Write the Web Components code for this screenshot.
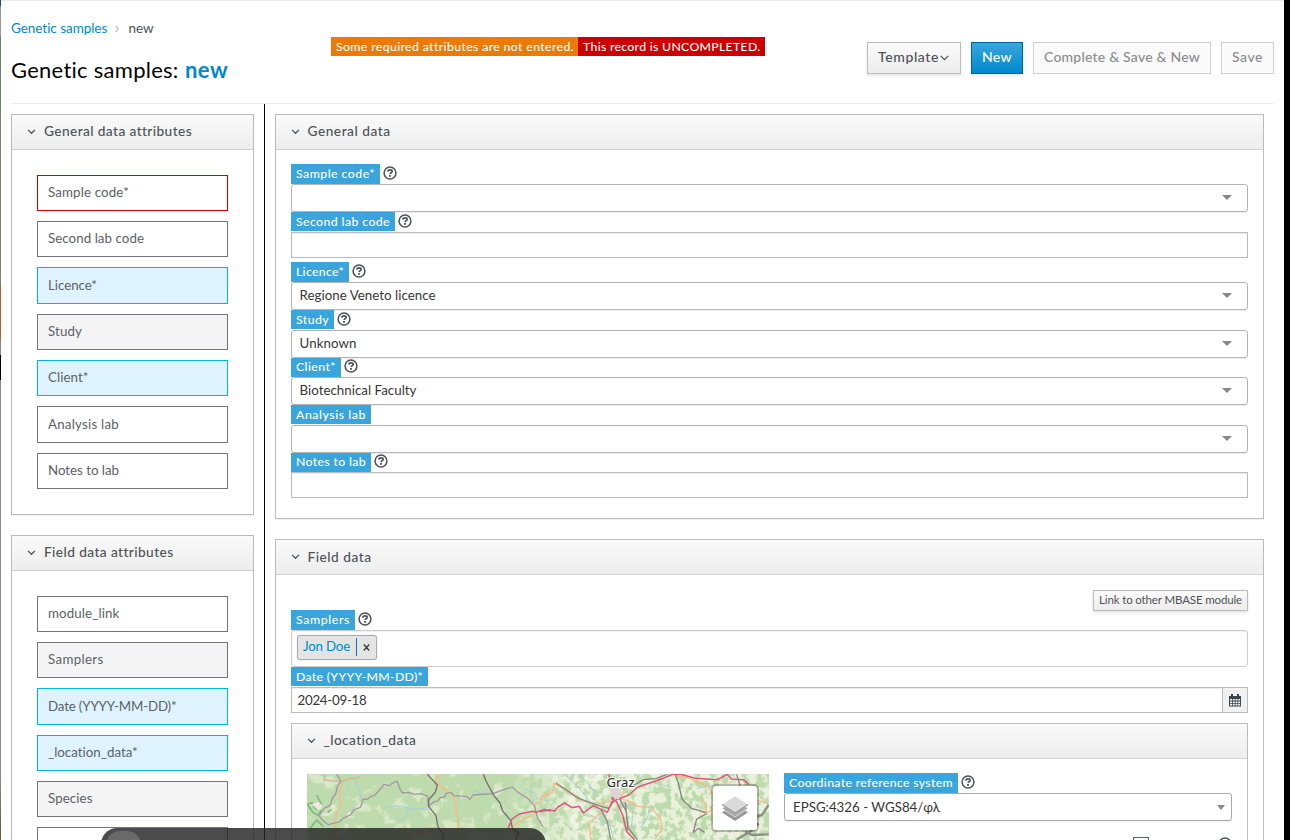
<!DOCTYPE html>
<html lang="en">
<head>
<meta charset="utf-8">
<title>Genetic samples: new</title>
<style>
html,body{margin:0;height:840px;overflow:hidden;background:#fff}
body{font-family:Lato,"Noto Sans","Open Sans",sans-serif;font-size:13.5px;color:#4d5258}
</style>
</head>
<body>
<sample-app></sample-app>
<script>
const make = (name, html, setup) => {
  const t = document.createElement('template');
  t.innerHTML = html;
  customElements.define(name, class extends HTMLElement {
    constructor() { super(); this.attachShadow({mode: 'open'}); }
    connectedCallback() {
      if (this.shadowRoot.childNodes.length) return;
      const c = t.content.cloneNode(true);
      if (setup) setup(this, c);
      this.shadowRoot.append(c);
    }
  });
};

make('sample-app', `
<style>
:host{display:grid;grid-template-columns:1px 1283px 6px;height:840px;overflow:hidden;position:relative}
.edge{background:linear-gradient(#0a4e7c 0 6px,#999 6px 36px,#71806c 36px 110px,#7b8670 110px 285px,#b0652b 285px 340px,#8b8b8b 340px 355px,#000 355px 380px,#8a8d8a 380px 780px,#666040 830px)}
.bar{background:#000}
.page{border-top:1px solid #ededed;padding:0 10px;display:flex;flex-direction:column;min-width:0}
header{height:102px;flex:none;display:grid;grid-template-columns:320px 1fr auto;border-bottom:1px solid #ededed}
.crumb{display:flex;align-items:center;padding-top:17px;height:20px;font-size:13.5px}
.crumb svg{margin:1px 10px 0 7px}
a,.rec{color:#0088ce}
h1{margin:16px 0 0;font-weight:400;font-size:22px;line-height:32px;color:#030303;display:flex;gap:6px}
.rec{font-weight:700}
.notes{display:flex;padding-top:36px;color:#fff;font-size:12.3px;line-height:19px;font-weight:500;height:19px}
.notes span{padding:0 4.5px 0 5px}
.o{background:#ec7a08}.r{background:#c00}
.actions{display:flex;gap:10px;padding-top:41px;height:32px}
.cols{display:grid;grid-template-columns:253px 1px 1fr;height:734px}
.rule{background:#000}
.left{padding:10px 10px 0 0;display:flex;flex-direction:column;gap:20px}
.right{padding:10px 10px 0 10px;display:flex;flex-direction:column;gap:20px}
.items{display:flex;flex-direction:column;gap:10px;padding:24.75px 25px 0}
.general{padding:14px 15px 0}
.fields{padding:15px 15px 0}
.top{display:flex;justify-content:flex-end;height:20px}
.nested{margin-top:10px}
.loc{display:grid;grid-template-columns:462px 448px;gap:15px;padding:15px 15px 0}
.crs{margin-top:-1px}
.extra{display:flex;justify-content:flex-end;gap:69px;margin-top:16px}
.extra i{width:14px;height:14px;border:1px solid #5c6166}
.pill{position:absolute;left:101px;top:828px;width:445px;height:40px;border-radius:16px 16px 0 0;background:rgba(38,38,38,.83)}
.pill:before{content:"";position:absolute;left:5px;top:3px;width:35px;height:35px;border-radius:14px;background:#696969}
</style>
<div class="edge"></div>
<div class="page">
 <header>
  <div>
   <div class="crumb"><a><fit-text w="96.5">Genetic samples</fit-text></a>
    <svg width="4" height="8" viewBox="0 0 4 8"><path d="M.6 .8 3.3 4 .6 7.2" fill="none" stroke="#9c9c9c"/></svg>
    <fit-text w="25">new</fit-text></div>
   <h1><fit-text w="168">Genetic samples:</fit-text><fit-text class="rec" w="43">new</fit-text></h1>
  </div>
  <div class="notes"><span class="o"><fit-text w="237.5">Some required attributes are not entered.</fit-text></span><span class="r"><fit-text w="177.5">This record is UNCOMPLETED.</fit-text></span></div>
  <div class="actions">
   <action-button kind="plain"><fit-text w="61">Template</fit-text><svg width="9" height="6" viewBox="0 0 9 6" style="margin:2px 1px 0 0"><path d="M.7 .8 4.5 4.6 8.3 .8" fill="none" stroke="#4d5258" stroke-width="1.2"/></svg></action-button>
   <action-button kind="primary"><fit-text w="30">New</fit-text></action-button>
   <action-button kind="off"><fit-text w="156">Complete &amp; Save &amp; New</fit-text></action-button>
   <action-button kind="off"><fit-text w="31">Save</fit-text></action-button>
  </div>
 </header>
 <div class="cols">
  <div class="left">
   <panel-box style="height:399px"><fit-text slot="title" w="147.5">General data attributes</fit-text>
    <div class="items">
     <attr-item kind="missing"><fit-text w="81">Sample code*</fit-text></attr-item>
     <attr-item><fit-text w="96">Second lab code</fit-text></attr-item>
     <attr-item kind="req"><fit-text w="49">Licence*</fit-text></attr-item>
     <attr-item kind="grey"><fit-text w="34">Study</fit-text></attr-item>
     <attr-item kind="req"><fit-text w="40.5">Client*</fit-text></attr-item>
     <attr-item><fit-text w="71">Analysis lab</fit-text></attr-item>
     <attr-item><fit-text w="71">Notes to lab</fit-text></attr-item>
    </div></panel-box>
   <panel-box style="height:399px;flex:none"><fit-text slot="title" w="129">Field data attributes</fit-text>
    <div class="items">
     <attr-item><fit-text w="71.5">module_link</fit-text></attr-item>
     <attr-item kind="grey"><fit-text w="55.5">Samplers</fit-text></attr-item>
     <attr-item kind="req"><fit-text w="128.5">Date (YYYY-MM-DD)*</fit-text></attr-item>
     <attr-item kind="req"><fit-text w="90">_location_data*</fit-text></attr-item>
     <attr-item kind="grey"><fit-text w="44.5">Species</fit-text></attr-item>
     <attr-item><fit-text w="8">P</fit-text></attr-item>
    </div></panel-box>
  </div>
  <div class="rule"></div>
  <div class="right">
   <panel-box style="height:403px;--inset:14.5px"><fit-text slot="title" w="83">General data</fit-text>
    <div class="general">
     <form-row label="Sample code*" w="79" help lead="20" tall kind="select"></form-row>
     <form-row label="Second lab code" w="94" help lead="20" kind="input" style="margin-bottom:4px"></form-row>
     <form-row label="Licence*" w="48" help lead="20" tall kind="select"><fit-text w="136">Regione Veneto licence</fit-text></form-row>
     <form-row label="Study" w="33" help lead="20" kind="select"><fit-text w="57">Unknown</fit-text></form-row>
     <form-row label="Client*" w="40" help lead="19" kind="select"><fit-text w="117">Biotechnical Faculty</fit-text></form-row>
     <form-row label="Analysis lab" w="70" lead="20" kind="select"></form-row>
     <form-row label="Notes to lab" w="70" help lead="19" kind="input"></form-row>
    </div></panel-box>
   <panel-box style="height:403px;flex:none;--inset:14.5px"><fit-text slot="title" w="64" style="top:-1px">Field data</fit-text>
    <div class="fields">
     <div class="top"><action-button kind="small"><fit-text w="143">Link to other MBASE module</fit-text></action-button></div>
     <form-row label="Samplers" w="54" help lead="20" tall kind="tags"><tag-chip><fit-text w="47">Jon Doe</fit-text></tag-chip></form-row>
     <form-row label="Date (YYYY-MM-DD)*" w="127" lead="20" kind="date"><fit-text w="69">2024-09-18</fit-text></form-row>
     <panel-box class="nested" style="height:300px;--inset:14.5px"><fit-text slot="title" w="93">_location_data</fit-text>
      <div class="loc">
       <terrain-map></terrain-map>
       <div class="crs"><form-row label="Coordinate reference system" w="164" help lead="20" tall kind="combo"><fit-text w="147">EPSG:4326 - WGS84/φλ</fit-text></form-row>
        <div class="extra"><i></i><help-icon></help-icon></div></div>
      </div></panel-box>
    </div></panel-box>
  </div>
 </div>
</div>
<div class="bar"></div>
<div class="pill"></div>`);

make('action-button', `
<style>
:host{display:flex;box-sizing:border-box;align-items:center;height:32px;border:1px solid #bbb;padding:0 10px 2px;font-size:14px;font-weight:500;background:linear-gradient(#fafafa,#ededed);box-shadow:0 2px 3px rgba(3,3,3,.1);gap:1px;line-height:28px}
:host([kind=primary]){color:#fff;border-color:#00659c;background:linear-gradient(#39a5dc,#0088ce)}
:host([kind=off]){color:#8b8d8f;border-color:#d1d1d1;background:#fafafa;box-shadow:none}
:host([kind=small]){height:21px;padding:0 5px 1px 5px;font-size:11.5px;font-weight:400;line-height:18px}
</style><slot></slot>`);

make('panel-box', `
<style>
:host{display:block;border:1px solid #bbb;box-shadow:0 1px 1px rgba(0,0,0,.05);min-width:0}
.h{height:34px;display:flex;align-items:center;border-bottom:1px solid #d1d1d1;background:linear-gradient(#fafafa,#ededed);padding-left:var(--inset,15px);font-size:13.7px;font-weight:500}
svg{margin-right:8px}
::slotted([slot=title]){position:relative;top:-2px}
</style>
<div class="h"><svg width="9" height="6" viewBox="0 0 9 6"><path d="M1 .9 4.5 4.3 8 .9" fill="none" stroke="#4d5258" stroke-width="1.3"/></svg><slot name="title"></slot></div>
<slot></slot>`);

make('attr-item', `
<style>
:host{display:flex;align-items:center;box-sizing:border-box;height:36.33px;border:1px solid #72767b;padding:0 10px 2px;background:#fff;color:#5c6166;font-size:13.3px}
:host([kind=grey]){background:#f4f4f4}
:host([kind=req]){background:#def3ff;border-color:#00b5dd}
:host([kind=missing]){border-color:#c00}
</style><slot></slot>`);

make('help-icon', `
<style>:host{display:block;width:14px;height:14px}svg{display:block}</style>
<svg width="14" height="14" viewBox="0 0 13 13" fill="none" stroke="#4d5258"><circle cx="6.5" cy="6.5" r="5.5" stroke-width="1.4"/><path d="M4.5 5.2C4.6 3.9 5.5 3.5 6.5 3.5 7.7 3.5 8.5 4.1 8.5 5 8.5 6.2 6.6 6.2 6.6 7.4" stroke-width="1.6"/><path d="M6.5 8.4V9.9" stroke-width="1.7"/></svg>`);

make('tag-chip', `
<style>
:host{display:flex;box-sizing:border-box;align-items:center;width:80px;height:25px;border:1px solid #aaa;border-radius:3px;background:#e4e4e4;padding:0 5px 2px;color:#0088ce;font-size:13.3px;box-shadow:0 0 1px #bbb}
i{width:1px;height:18px;background:#0079b8;margin:1px 6px 0}
svg{margin-top:2px}
</style><slot></slot><i></i><svg width="7" height="7" viewBox="0 0 7 7"><path d="M.8 .5 6.2 6.5M6.2 .5 .8 6.5" stroke="#333" stroke-width="1.2"/></svg>`);

make('form-row', `
<style>
:host{display:block}
.lead{display:flex;gap:3.3px;align-items:flex-start}
.lab{background:#39a5dc;color:#fff;font-size:12.3px;font-weight:500;line-height:19px;padding:0 4.5px 0 5px;height:19px;box-sizing:border-box}
help-icon{margin-top:1.5px}
.box{display:flex;align-items:center;box-sizing:border-box;border:1px solid #bbb;background:#fff;color:#363636;font-size:13.3px}
.select,.combo{height:28px;border-radius:3px;padding:0 15px 2px 7.5px;border-color:#b4b4b4;box-shadow:0 1px 1px rgba(0,0,0,.07)}
.combo{padding:0 6px 1px 8px;border-color:#aaa}
.input,.date{height:26px;box-shadow:inset 0 1px 1px rgba(3,3,3,.075)}
.tags{height:37px;border-radius:3px;border-color:#ccc;padding:0 5px 3px;box-shadow:inset 0 1px 2px rgba(0,0,0,.07)}
.date{padding-left:5.5px;justify-content:space-between}
.cal{width:24px;height:24px;border-left:1px solid #bbb;background:#f1f1f1;display:grid;place-items:center}
.arrow{border:5px solid transparent;border-top-color:#888;border-bottom:0;margin:1px 0 0 auto}
.combo .arrow{border-width:5px 4.5px 0}
</style>
<div class="lead"><div class="lab"><fit-text></fit-text></div></div>
<div class="box"><slot></slot></div>`, (el, c) => {
  const kind = el.getAttribute('kind'), lead = c.querySelector('.lead'), lab = c.querySelector('.lab'), box = c.querySelector('.box'), t = c.querySelector('fit-text');
  t.textContent = el.getAttribute('label');
  t.setAttribute('w', el.getAttribute('w'));
  lead.style.height = el.getAttribute('lead') + 'px';
  if (el.hasAttribute('tall')) lab.style.height = '20px';
  if (el.getAttribute('lead') === '19') lab.style.lineHeight = '17px';
  if (el.hasAttribute('help')) {
    const h = document.createElement('help-icon');
    if (el.getAttribute('lead') === '19') h.style.marginTop = '.8px';
    lead.append(h);
  }
  box.classList.add(kind);
  if (kind === 'select' || kind === 'combo') box.insertAdjacentHTML('beforeend', '<span class="arrow"></span>');
  if (kind === 'date') box.insertAdjacentHTML('beforeend', '<span class="cal"><svg width="12" height="13" viewBox="0 0 12 13"><path d="M0 2h12v10.5H0z" fill="#38454f"/><path d="M3 0v3M9 0v3" stroke="#38454f" stroke-width="2"/><path d="M1 5h2v1.6H1zM3.8 5h2v1.6h-2zM6.5 5h2v1.6h-2zM9.2 5h1.9v1.6H9.2zM1 7.4h2V9H1zM3.8 7.4h2V9h-2zM6.5 7.4h2V9h-2zM9.2 7.4h1.9V9H9.2zM1 9.8h2v1.8H1zM3.8 9.8h2v1.8h-2zM6.5 9.8h2v1.8h-2zM9.2 9.8h1.9v1.8H9.2z" fill="#f6f6f6"/></svg></span>');
});

make('terrain-map', `
<style>
:host{display:block;position:relative;width:462px;height:120px;overflow:hidden;background:#bedbad}
svg{display:block}
.layers{position:absolute;left:404px;top:10px;width:44px;height:44px;border:2px solid rgba(0,0,0,.22);border-radius:5px;background:#fff;background-clip:padding-box;display:grid;place-items:center}
</style>
<svg width="462" height="120" viewBox="0 0 462 120" fill="none" stroke-linejoin="round">
<defs>
<filter id="a" x="0" y="0" width="1" height="1"><feTurbulence type="fractalNoise" baseFrequency=".07" numOctaves="5" seed="8"/><feColorMatrix values="0 0 0 0 .88  0 0 0 0 .93  0 0 0 0 .76  9 0 0 0 -5.1"/></filter>
<filter id="b" x="0" y="0" width="1" height="1"><feTurbulence type="fractalNoise" baseFrequency=".14" numOctaves="5" seed="3"/><feColorMatrix values="0 0 0 0 .93  0 0 0 0 .95  0 0 0 0 .83  7 0 0 0 -2.9"/></filter>
<linearGradient id="f"><stop offset=".42" stop-color="#000"/><stop offset=".58" stop-color="#fff"/></linearGradient><mask id="m"><rect width="462" height="120" fill="url(#f)"/></mask>
</defs>
<rect width="462" height="120" fill="#bedbad"/>
<rect width="300" height="120" filter="url(#a)" opacity=".5"/>
<g mask="url(#m)"><rect width="462" height="120" filter="url(#b)" opacity=".75"/></g>
<g transform="translate(-7 -9) scale(.33333)">
<path d="M22 118l14-5 8 16 18 8-8 14-16-10zM50 90l15 30M30 190l20-25 20 20M80 145l14-12" stroke="#7dbb78" stroke-width="5"/>
<path d="M35 118l20-8 14 14-12 14zM60 150l22-8 6 12zM88 122l16-4-4 14zM140 150l8-12 8 14-8 10z" fill="#eee5e0"/>
<path d="M165 45l12 30 8 28M288 122l30 5 10 2 58 4M330 130l-15 30-20 6M255 128l34-6M520 78l50 12M670 70l25 12 20 20 30 6" stroke="#a4cfdf" stroke-width="3"/>
<path d="M75 28l-3 17 53 5M125 50l28-10 22-1 7-12" stroke="#d7b3a0" stroke-width="4"/>
<path d="M125 50l-7 40 6 26-16 34-2 45 6 30M425 28l-17 12 8 20 43 28 10 34-2 18 8 20-3 38M370 187l45 3-30 8-80 24M750 88l-22 6-6 16-16 8-2 32-30 10-24 16-18 18" stroke="#f4bd85" stroke-width="4.5"/>
<path d="M110 28l13 20-10 15-6 24-10 12-6 22-20 10-14 22 12 14 16 12 14-4 18-4 14-12 22-10 8-14 20-8 6-14V104l16-2 10-8 12-4 22-24 4-8 18 4 6-6 16-8 10 26 6 10 20-2 16 6 20-2 20 8 2 30 18-14 10-2 8-10 14-2 2-10 16-4 8 10 40 2 8 10 10-14 60-4 32-12 26-8 14 14 32 20 20 22 10 38 16 26" stroke="#a297a2" stroke-width="3.8"/>
<path d="M382 28l30 32-6 22-20 22v20l22 28 6 34 16 22v20M550 28l8 20 24 44 18 22 8 24 24 28 6 28 18 8-14 40" stroke="#7a7272" stroke-width="4.2"/>
<path d="M624 190l12-28 22-15 40-8 10 3 24-9 20 6" stroke="#e05680" stroke-width="4.5"/>
</g>
<g transform="translate(233 -9) scale(.33333)">
<path d="M75 28l50 50 60 80M120 28l30 34 24 34M250 110l30 26-6 50M330 120l-8 40-22 30M360 70l30-14M470 70l50-8M150 150l60 30 10 40" stroke="#a4cfdf" stroke-width="3"/>
<path d="M0 96l38-14 6-28M40 55l34 18 44 30 50 16 36-10 28-10 30-22M228 100l34 6 30 18 44 4 26 36 4 30-22 28M184 140l-36 34 4 50M400 30l44 8 60 26 14 24 20 18M498 145l2-22-18-26M480 140l20 4 40-20M610 80l30 22 44 14" stroke="#f4bd85" stroke-width="4"/>
<path d="M48 54l68 46 60 22 30 8 14-20 2-34M182 132l20 38 10 54M236 70l-4 18 26 50 6 42-4 20M256 112l8 76 28 36M280 62l30-18 40-4 30-12M406 28l10 30 10 44 28 28 44 12M500 146l-30 16-10 40 16-12 18 12M590 28l10 34 20 24" stroke="#8e8583" stroke-width="4"/>
<path d="M686 120l-20 30-32 8 20 20-24 22-40 24M686 208l-50 2-20-10" stroke="#8c9187" stroke-width="7"/>
<path d="M0 140l26-6 18 4 10-12 20-12 22 14 22-4 12 20 30-22 42 20 14-32 50-20 28-24 70-24 34-14h24l44 12 66 4 30-16 12 14 36 2 16 14M208 28v28l10 22-2 24 14 8 18 40 12 50 24 24" stroke="#e05680" stroke-width="4.5"/>
<path d="M206 60l20-6 20 30-10 20-22-10z" fill="#ded3cf"/>
</g>
<text x="299.5" y="12.5" font-family="Noto Sans" font-size="13" fill="#222" stroke="#fff" stroke-width="2" paint-order="stroke" textLength="28" lengthAdjust="spacingAndGlyphs">Graz</text>
</svg>
<div class="layers"><svg width="28" height="27" viewBox="0 0 28 27"><path d="M1 17.5 14 26 27 17.5 24 15.5 14 22 4 15.5z" fill="#999"/><path d="M1 13.5 14 22 27 13.5 24 11.5 14 18 4 11.5z" fill="#a8a8a8" stroke="#fff" stroke-width=".5"/><path d="M1 9.5 14 18 27 9.5 14 1z" fill="#dadada" stroke="#fff" stroke-width=".4"/><path d="M1 9.5 14 18 27 9.5" fill="none" stroke="#808080" stroke-width="1"/></svg></div>`);

/* Spreads its text over the width given in "w". */
customElements.define('fit-text', class extends HTMLElement {
  connectedCallback() {
    if (!this.shadowRoot) {
      this.attachShadow({mode: 'open'}).innerHTML = '<style>:host{display:inline-block;white-space:nowrap;flex:none}</style><slot></slot>';
    }
    const w = +this.getAttribute('w');
    const natural = this.getBoundingClientRect().width;
    this.style.letterSpacing = (w - natural) / this.textContent.length + 'px';
    this.style.width = w + 'px';
  }
});
</script>
</body>
</html>
